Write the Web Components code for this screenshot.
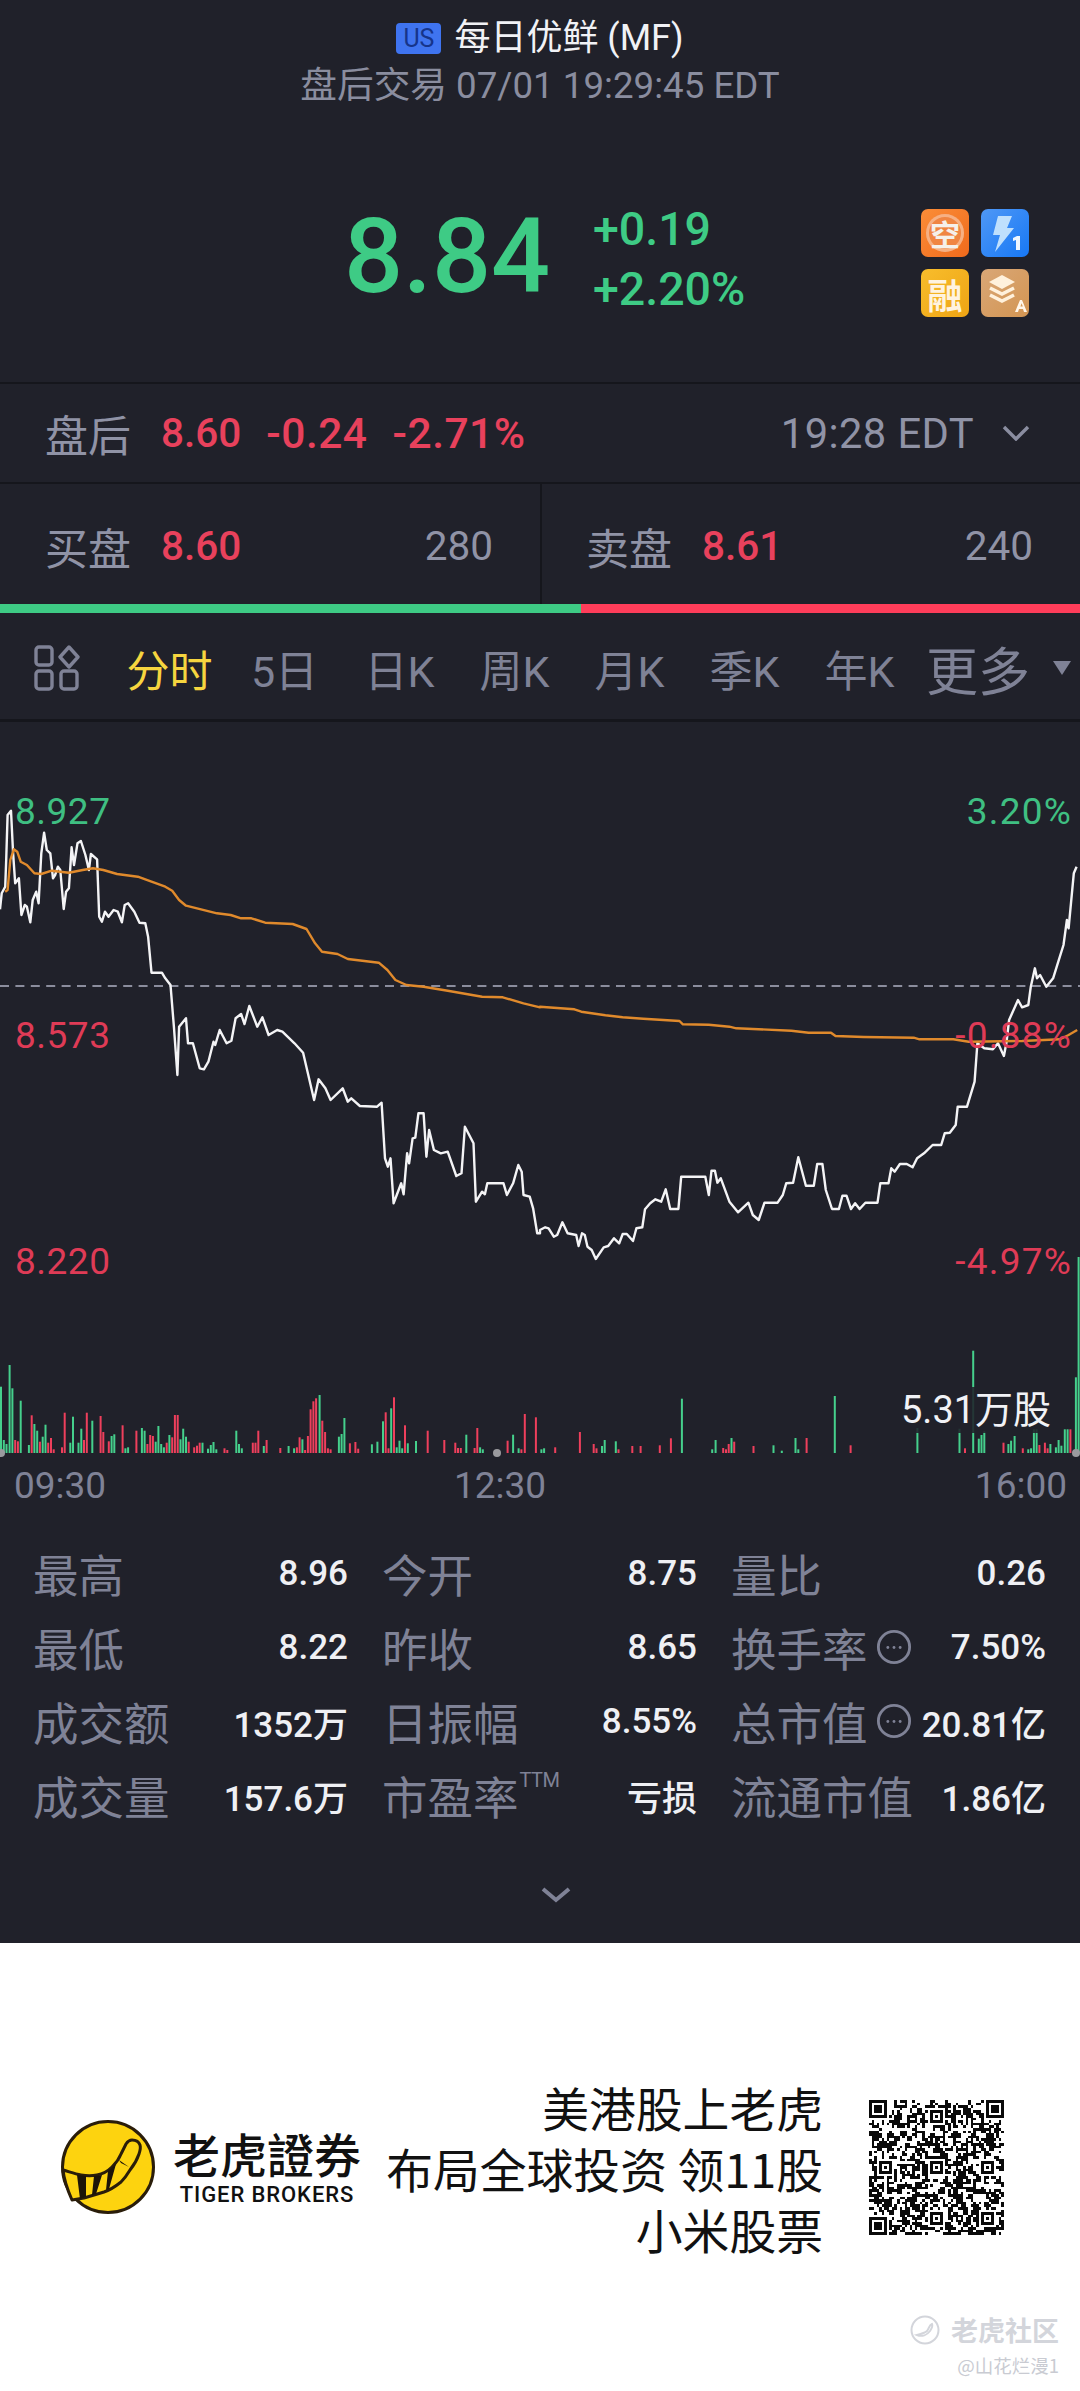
<!DOCTYPE html>
<html lang="zh">
<head>
<meta charset="utf-8">
<title>每日优鲜 (MF)</title>
<style>
  html, body { margin: 0; padding: 0; background: #20212a; }
  body {
    width: 1080px;
    height: 2391px;
    overflow: hidden;
    font-family: Roboto, "Noto Sans CJK SC", sans-serif;
    color: #7f8296;
  }
</style>
</head>
<body>
<quote-header></quote-header>
<quote-price></quote-price>
<quote-session></quote-session>
<quote-depth></quote-depth>
<imbalance-bar></imbalance-bar>
<period-tabs></period-tabs>
<intraday-chart></intraday-chart>
<stat-grid>
  <stat-cell label="最高" value="8.96"></stat-cell>
  <stat-cell label="今开" value="8.75"></stat-cell>
  <stat-cell label="量比" value="0.26"></stat-cell>
  <stat-cell label="最低" value="8.22"></stat-cell>
  <stat-cell label="昨收" value="8.65"></stat-cell>
  <stat-cell label="换手率" value="7.50%" info></stat-cell>
  <stat-cell label="成交额" value="1352万"></stat-cell>
  <stat-cell label="日振幅" value="8.55%"></stat-cell>
  <stat-cell label="总市值" value="20.81亿" info></stat-cell>
  <stat-cell label="成交量" value="157.6万"></stat-cell>
  <stat-cell label="市盈率" value="亏损" sup="TTM"></stat-cell>
  <stat-cell label="流通市值" value="1.86亿"></stat-cell>
</stat-grid>
<promo-footer></promo-footer>

<script>
customElements.define('quote-header', class extends HTMLElement {
  constructor() {
    super()
    this.attachShadow({ mode: 'open' }).innerHTML = `
    <style>
    :host { display: flex; flex-direction: column; align-items: center; height: 112px; padding-top: 18px; box-sizing: border-box; }
    .top { display: flex; align-items: center; height: 40px; color: #f1f2f6; font-size: 36px; line-height: 40px; }
    .us { width: 45px; height: 31px; margin-right: 13px; border-radius: 4px; background: #3f74f0; color: #16348a; font-size: 25px; line-height: 31px; text-align: center; }
    .sub { margin-top: 8px; color: #8a8d9f; font-size: 36.700px; line-height: 40px; white-space: nowrap; }
    </style>
    <div class="top"><span class="us">US</span>每日优鲜 (MF)</div>
    <div class="sub">盘后交易 07/01 19:29:45 EDT</div>
    `
  }
})

customElements.define('quote-price', class extends HTMLElement {
  constructor() {
    super()
    this.attachShadow({ mode: 'open' }).innerHTML = `
    <style>
    :host { display: flex; align-items: center; height: 272px; padding: 20px 51px 0 344px; box-sizing: border-box; border-bottom: 2px solid #15161c; color: #3ecb85; }
    .last { width: 249px; font-size: 104px; font-weight: 500; line-height: 110px; white-space: nowrap; }
    .chg { font-size: 46.500px; font-weight: 500; line-height: 60px; margin-top: 4px; }
    .badges { display: grid; grid-template-columns: 48px 48px; gap: 12px; margin-left: auto; margin-top: 12px; }
    .b { width: 48px; height: 48px; border-radius: 7px; display: flex; align-items: center; justify-content: center; color: #fff3df; overflow: hidden; }
    .kong { background: linear-gradient(135deg, #fb8d38, #ef6a1c); }
    .kong span { width: 38px; height: 38px; border-radius: 50%; display: flex; align-items: center; justify-content: center; font-size: 30px; font-weight: 700; color: #f5f0ea; background: #f08542; box-shadow: 0 0 0 3px #f6b083 inset; }
    .flash { background: linear-gradient(135deg, #4f98f6, #1778f5); }
    .rong { background: linear-gradient(135deg, #f8bd2c, #eea414); font-size: 35px; font-weight: 700; }
    .layer { background: linear-gradient(135deg, #d9a777, #d39552); }
    </style>
    <div class="last">8.84</div>
    <div class="chg"><div>+0.19</div><div>+2.20%</div></div>
    <div class="badges">
      <div class="b kong"><span>空</span></div>
      <div class="b flash"><svg width="48" height="48" viewBox="0 0 48 48"><path d="M17 7h14l-5 12h7L14 43l5-17h-7z" fill="#bfe0fd"/><path d="M36 27h3v14h-4V31l-3 1v-3z" fill="#eef6ff"/></svg></div>
      <div class="b rong">融</div>
      <div class="b layer"><svg width="48" height="48" viewBox="0 0 48 48"><path d="M21 6l13 7-13 7-13-7z" fill="#fff1dc"/><path d="M9 19l12 6 12-6M9 26l12 6 12-6" fill="none" stroke="#fff1dc" stroke-width="3.600"/><path d="M34 43l5-12h2l5 12h-3l-1-3h-4l-1 3zM39.400 37.500h2.400l-1.200-3.200z" fill="#fff6ea" fill-rule="evenodd"/></svg></div>
    </div>
    `
  }
})

customElements.define('quote-session', class extends HTMLElement {
  constructor() {
    super()
    this.attachShadow({ mode: 'open' }).innerHTML = `
    <style>
    :host { display: flex; align-items: center; height: 100px; padding: 0 50px 0 45px; box-sizing: border-box; border-bottom: 2px solid #15161c; font-size: 40.500px; color: #9093a6; }
    .t { width: 116px; font-size: 43px; }
    .r { color: #e8415c; font-weight: 500; }
    .r2 { margin-left: 25px; font-size: 42.500px; letter-spacing: .5px; }
    .time { margin-left: auto; margin-right: 28px; font-size: 41.700px; letter-spacing: .4px; }
    svg { display: block; }
    </style>
    <span class="t">盘后</span>
    <span class="r">8.60</span>
    <span class="r r2">-0.24</span>
    <span class="r r2">-2.71%</span>
    <span class="time">19:28 EDT</span>
    <svg width="28" height="16" viewBox="0 0 28 16"><path d="M2 2l12 12L26 2" fill="none" stroke="#8a8da0" stroke-width="3.400"/></svg>
    `
  }
})

customElements.define('quote-depth', class extends HTMLElement {
  constructor() {
    super()
    this.attachShadow({ mode: 'open' }).innerHTML = `
    <style>
    :host { display: grid; grid-template-columns: 540px 540px; height: 120px; box-sizing: border-box; font-size: 40.500px; color: #9093a6; }
    .side { display: flex; align-items: center; padding: 4px 47px 0 45px; box-sizing: border-box; }
    .side + .side { border-left: 2px solid #15161c; padding-left: 44px; }
    .t { width: 116px; font-size: 43px; }
    .p { color: #e8415c; font-weight: 500; }
    .q { margin-left: auto; }
    </style>
    <div class="side"><span class="t">买盘</span><span class="p">8.60</span><span class="q">280</span></div>
    <div class="side"><span class="t">卖盘</span><span class="p">8.61</span><span class="q">240</span></div>
    `
  }
})

customElements.define('imbalance-bar', class extends HTMLElement {
  constructor() {
    super()
    this.attachShadow({ mode: 'open' }).innerHTML = `
    <style>
    :host { display: flex; height: 9px; background: #ff3d5a; }
    div { width: 581px; background: #3ecb85; }
    </style>
    <div></div>
    `
  }
})

customElements.define('period-tabs', class extends HTMLElement {
  constructor() {
    super()
    this.attachShadow({ mode: 'open' }).innerHTML = `
    <style>
    :host { display: flex; align-items: center; height: 109px; padding: 4px 0 0 34px; box-sizing: border-box; border-bottom: 3px solid #15161c; font-size: 43px; color: #7f8296; }
    svg { display: block; }
    .grid { width: 78px; flex: none; }
    .tab { width: 115px; flex: none; text-align: center; }
    .on { color: #f6d53f; }
    .more { margin-left: 9px; font-size: 52px; }
    .arrow { margin-left: 22px; }
    </style>
    <div class="grid"><svg width="46" height="46" viewBox="0 0 46 46" fill="none" stroke="#7f8296" stroke-width="3.400">
      <rect x="2" y="2" width="16" height="18" rx="3"/><rect x="2" y="26" width="16" height="18" rx="3"/>
      <path d="M35 2l9 10-9 10-9-10z" stroke-linejoin="round"/><rect x="27" y="26" width="16" height="18" rx="3"/></svg></div>
    <span class="tab on">分时</span>
    <span class="tab">5日</span>
    <span class="tab">日K</span>
    <span class="tab">周K</span>
    <span class="tab">月K</span>
    <span class="tab">季K</span>
    <span class="tab">年K</span>
    <span class="more">更多</span>
    <svg class="arrow" width="20" height="14" viewBox="0 0 20 14"><path d="M1 0h18L10 14z" fill="#7f8296"/></svg>
    `
  }
})

// traced from crops 1568 wide for 540 real px, 3x tall: left crop starts at x 0, right crop at x 540, both at y 760
const CROP_X = 540 / 1568
const WHITE_LEFT = '0,448 5,400 15,380 18,300 22,165 32,152 38,280 44,370 55,355 62,465 72,435 78,440 88,487 95,420 105,395 112,430 120,280 128,218 136,270 146,280 154,355 160,345 168,320 175,330 185,447 192,395 200,385 208,262 215,315 225,250 235,243 248,285 258,330 264,282 282,298 288,470 296,485 305,455 315,470 330,450 342,455 354,487 362,435 372,430 390,455 405,488 422,490 430,530 440,638 470,638 480,655 495,675 505,800 515,945 520,800 540,775 546,850 560,850 580,925 592,928 605,905 620,845 625,855 638,810 658,850 672,842 684,775 700,762 710,792 724,738 747,800 762,772 780,825 805,810 820,815 855,850 880,878 912,1020 925,958 945,985 960,1020 995,985 1010,1025 1020,1015 1045,1038 1095,1040 1108,1028 1118,1195 1126,1220 1134,1195 1143,1330 1165,1270 1172,1303 1182,1180 1188,1210 1198,1135 1206,1133 1215,1060 1230,1060 1238,1190 1246,1110 1260,1170 1280,1180 1300,1175 1325,1248 1340,1240 1350,1100 1375,1150 1382,1325 1400,1295 1408,1303 1415,1270 1462,1270 1472,1305 1490,1270 1505,1215 1515,1235 1520,1305 1538,1310 1548,1345 1560,1420 1568,1420'
const WHITE_RIGHT = '0,1410 15,1402 25,1405 40,1430 50,1425 65,1387 80,1420 105,1425 112,1458 122,1420 130,1425 138,1460 150,1470 162,1497 185,1462 198,1458 215,1435 230,1450 240,1422 252,1422 270,1443 280,1405 297,1402 305,1348 320,1330 335,1318 352,1325 365,1288 378,1347 402,1347 410,1250 480,1250 490,1305 498,1232 508,1232 515,1268 525,1255 550,1325 575,1357 605,1328 618,1365 635,1380 652,1328 690,1328 705,1305 715,1270 735,1268 750,1192 772,1277 795,1277 805,1212 820,1212 830,1290 848,1347 868,1347 878,1307 890,1307 903,1347 915,1330 928,1347 945,1328 980,1328 988,1270 1012,1270 1020,1225 1030,1235 1045,1212 1065,1212 1082,1222 1095,1195 1115,1180 1140,1155 1165,1155 1175,1120 1190,1118 1207,1095 1213,1040 1240,1040 1262,965 1270,850 1290,865 1315,868 1330,850 1347,888 1355,845 1362,780 1388,720 1400,742 1418,735 1425,680 1437,625 1443,655 1452,645 1470,680 1490,655 1505,605 1520,555 1530,480 1535,505 1550,340 1558,320'
const AVG_LEFT = '15,395 22,390 30,300 40,268 50,275 60,305 78,315 100,340 120,342 150,332 200,338 240,330 270,325 300,330 340,342 400,350 440,365 480,380 500,392 520,420 540,437 630,460 670,465 700,475 730,475 770,488 850,492 890,507 915,550 935,575 980,582 1010,597 1100,608 1125,630 1148,660 1180,675 1230,680 1300,692 1400,710 1460,712 1520,730 1568,742'
const AVG_RIGHT = '0,740 100,748 120,755 190,766 240,772 300,776 405,783 415,793 490,794 550,800 570,805 730,812 780,818 845,818 858,828 940,831 1085,833 1102,838 1200,838 1245,845 1400,843 1510,838 1535,825 1560,810'

// x,top pairs in the same crop units, but y starts at 1300
const VOL_GREEN_LEFT = [3,260,11,420,19,432,28,195,36,265,60,302,84,435,100,372,108,392,124,410,132,374,204,428,212,350,228,428,236,386,268,362,324,408,332,403,364,445,372,442,412,384,420,392,452,425,460,378,468,432,476,442,492,405,524,418,532,386,540,410,588,428,604,446,612,435,620,426,628,448,686,392,694,432,702,445,766,438,838,438,854,445,878,418,928,285,984,410,992,402,1000,354,1080,433,1096,425,1112,364,1136,325,1152,442,1160,422,1168,445,1184,430,1208,423,1354,404,1394,442,1402,448,1490,404,1506,445]
const VOL_RED_LEFT = [44,420,52,424,92,346,116,425,140,428,148,414,156,448,180,442,188,338,244,420,252,338,292,348,300,396,316,424,356,376,396,392,428,432,436,405,444,408,484,428,500,412,508,345,516,345,548,425,564,442,572,437,580,428,652,445,660,450,734,428,742,428,750,392,774,420,814,444,862,442,870,412,886,450,894,408,902,328,910,304,918,295,936,362,944,396,952,445,960,448,1016,430,1032,426,1040,446,1120,337,1128,445,1144,292,1176,376,1242,392,1290,420,1322,428,1330,444,1338,444,1378,444,1386,384,1474,422,1514,448,1524,342,1556,352]
const VOL_GREEN_RIGHT = [4,448,12,445,180,438,188,420,220,424,412,296,500,448,510,420,556,414,678,436,702,452,742,414,750,448,856,288,1096,384,1218,386,1258,152,1274,416,1282,405,1290,394,1360,432,1368,422,1378,408,1418,448,1426,445,1434,388,1442,388,1482,432,1498,442,1506,420,1514,437,1524,388,1532,388,1556,232,1564,-129]
const VOL_RED_RIGHT = [116,396,156,432,164,445,44,442,228,448,268,438,292,438,348,436,380,415,532,444,540,448,548,432,564,425,620,438,774,414,902,436,1234,445,1346,428,1402,445,1450,435,1466,428,1474,445,1540,388]

const toPage = (pts, dx) => pts.split(' ').map(p => {
  const [x, y] = p.split(',').map(Number)
  return `${(dx + x * CROP_X).toFixed(1)},${(760 + y / 3).toFixed(1)}`
}).join(' ')

const bars = (list, dx, color) => {
  let out = ''
  for (let i = 0; i < list.length; i += 2) {
    const x = dx + list[i] * CROP_X - 1
    const top = 1300 + list[i + 1] / 3
    out += `<rect x="${x.toFixed(1)}" y="${top.toFixed(1)}" width="2" height="${(1453 - top).toFixed(1)}" fill="${color}"/>`
  }
  return out
}

customElements.define('intraday-chart', class extends HTMLElement {
  constructor() {
    super()
    this.attachShadow({ mode: 'open' }).innerHTML = `
    <style>
    :host { display: block; position: relative; height: 798px; font-size: 37px; line-height: 40px; }
    svg { display: block; }
    .l { position: absolute; }
    .g { color: #3fbf82; }
    .r { color: #df3b56; }
    .left { left: 15px; letter-spacing: .5px; }
    .right { right: 8px; letter-spacing: 1.200px; }
    .time { top: 744px; color: #7f8296; }
    .vol { position: absolute; left: 899px; top: 665px; padding: 0 2px; height: 46px; font-size: 38px; line-height: 46px; background: rgba(32,33,42,.88); color: #f1f2f6; }
    </style>
    <svg width="1080" height="798" viewBox="0 722 1080 798">
      ${bars(VOL_GREEN_LEFT, 0, '#45d08c')}${bars(VOL_RED_LEFT, 0, '#ee3f5c')}
      ${bars(VOL_GREEN_RIGHT, 540, '#45d08c')}${bars(VOL_RED_RIGHT, 540, '#ee3f5c')}
      <circle cx="1" cy="1453" r="4" fill="#9a9a9e"/><circle cx="497" cy="1453" r="4" fill="#9a9a9e"/><circle cx="1076" cy="1453" r="4" fill="#9a9a9e"/>
      <path d="M0 986H1080" stroke="#8b8d9d" stroke-width="2" stroke-dasharray="9 6.400"/>
      <polyline points="${toPage(WHITE_LEFT, 0)} ${toPage(WHITE_RIGHT, 540)}" fill="none" stroke="#f4f4f6" stroke-width="2.400" stroke-linejoin="round"/>
      <polyline points="${toPage(AVG_LEFT, 0)} ${toPage(AVG_RIGHT, 540)}" fill="none" stroke="#e08a2c" stroke-width="2.400" stroke-linejoin="round"/>
    </svg>
    <span class="l left g" style="top:70px">8.927</span>
    <span class="l left r" style="top:294px">8.573</span>
    <span class="l left r" style="top:520px">8.220</span>
    <span class="l right g" style="top:70px">3.20%</span>
    <span class="l right r" style="top:294px">-0.88%</span>
    <span class="l right r" style="top:520px">-4.97%</span>
    <span class="l time" style="left:14px">09:30</span>
    <span class="l time" style="left:454px">12:30</span>
    <span class="l time" style="right:13px">16:00</span>
    <span class="vol">5.31万股</span>
    `
  }
})

customElements.define('stat-grid', class extends HTMLElement {
  constructor() {
    super()
    this.attachShadow({ mode: 'open' }).innerHTML = `
    <style>
    :host { display: grid; grid-template-columns: repeat(3, 315px); grid-auto-rows: 74px; column-gap: 34px; height: 423px; padding: 16px 0 0 33px; box-sizing: border-box; position: relative; }
    svg { position: absolute; left: 541px; top: 367px; }
    </style>
    <slot></slot>
    <svg width="30" height="16" viewBox="0 0 30 16"><path d="M2 2l13 11L28 2" fill="none" stroke="#7f8296" stroke-width="4"/></svg>
    `
  }
})

customElements.define('stat-cell', class extends HTMLElement {
  constructor() {
    super()
    const sup = this.getAttribute('sup')
    const info = this.hasAttribute('info')
    this.attachShadow({ mode: 'open' }).innerHTML = `
    <style>
    :host { display: flex; align-items: center; font-size: 45.500px; color: #7f8296; }
    .sup { align-self: flex-start; margin: 12px 0 0 1px; font-size: 20px; line-height: 20px; letter-spacing: -.5px; }
    .info { margin-left: 8px; flex: none; }
    .v { margin-left: auto; color: #eff0f4; font-size: 35px; font-weight: 500; white-space: nowrap; }
    </style>
    <span>${this.getAttribute('label')}</span>
    ${sup ? `<span class="sup">${sup}</span>` : ''}
    ${info ? `<svg class="info" width="36" height="36" viewBox="0 0 38 38"><circle cx="19" cy="19" r="16.500" fill="none" stroke="#7f8296" stroke-width="3"/><circle cx="12.500" cy="19.500" r="1.500" fill="#7f8296"/><circle cx="19" cy="19.500" r="1.500" fill="#7f8296"/><circle cx="25.500" cy="19.500" r="1.500" fill="#7f8296"/></svg>` : ''}
    <span class="v">${this.getAttribute('value')}</span>
    `
  }
})

// the code is not meant to scan: finders, alignment marks and a seeded fill
const qrPath = () => {
  const n = 53
  const cells = []
  let seed = 20210701
  const next = () => {
    seed = (seed * 1664525 + 1013904223) % 4294967296
    return seed / 4294967296
  }
  for (let y = 0; y < n; y++) {
    cells.push([])
    for (let x = 0; x < n; x++) {
      const prev = x ? cells[y][x - 1] : 0
      const above = y ? cells[y - 1][x] : 0
      cells[y].push(next() < .34 + prev * .16 + above * .16 ? 1 : 0)
    }
  }
  const mark = (cx, cy, r, hole) => {
    for (let y = cy - r - 1; y <= cy + r + 1; y++) {
      for (let x = cx - r - 1; x <= cx + r + 1; x++) {
        if (!cells[y] || x < 0 || x >= n) continue
        const d = Math.max(Math.abs(x - cx), Math.abs(y - cy))
        cells[y][x] = d > r ? 0 : d === r || d <= hole ? 1 : 0
      }
    }
  }
  mark(3, 3, 3, 1)
  mark(49, 3, 3, 1)
  mark(3, 49, 3, 1)
  for (const [x, y] of [[26, 6], [6, 26], [26, 26], [46, 26], [26, 46], [46, 46]]) mark(x, y, 2, 0)
  let d = ''
  cells.forEach((row, y) => row.forEach((on, x) => { if (on) d += `M${x} ${y}h1v1h-1z` }))
  return d
}

customElements.define('promo-footer', class extends HTMLElement {
  constructor() {
    super()
    this.attachShadow({ mode: 'open' }).innerHTML = `
    <style>
    :host { display: flex; align-items: center; position: relative; height: 448px; padding: 0 76px 0 60px; box-sizing: border-box; background: #fff; color: #111; font-family: "Noto Sans CJK SC", Roboto, sans-serif; }
    svg { display: block; flex: none; }
    .brand { margin-left: 17px; display: flex; flex-direction: column; align-items: center; }
    .cn { font-family: "Noto Sans CJK TC", sans-serif; font-size: 47px; line-height: 54px; font-weight: 500; }
    .en { font-family: Roboto, sans-serif; font-size: 22px; line-height: 26px; font-weight: 500; letter-spacing: .9px; margin-top: 2px; }
    .slogan { margin-left: auto; margin-right: 46px; text-align: right; font-size: 46.800px; line-height: 61px; }
    .mark { position: absolute; right: 21px; bottom: 14px; width: 170px; color: #c9cbd2; text-align: right; }
    .mark div { display: flex; align-items: center; justify-content: flex-end; font-size: 27px; line-height: 36px; font-weight: 700; color: #d3d5db; }
    .mark svg { margin-right: 11px; }
    .mark small { display: block; font-size: 18.500px; line-height: 24px; margin-top: 5px; }
    </style>
    <svg width="96" height="96" viewBox="0 0 96 96">
      <circle cx="48" cy="48" r="45.500" fill="#fdd30f" stroke="#2a1d0a" stroke-width="3"/>
      <path d="M3 51C10 53 15 55 21 56C27 57 32 57 37 56C43 55 48 52 52 48C56 44 59 40 61 35L66 25C68 22 70 21 72 21C76 21 79 23 80 26C81 29 80 32 79 35C77 41 74 46 70 51C67 56 64 60 61 63C56 67 50 71 44 73L24 79L12 81C8 72 4 61 3 51z" fill="#fdd30f" stroke="#2a1d0a" stroke-width="3" stroke-linejoin="round"/>
      <path d="M17 56L26 57L26 78L20 80zM34 57L42 56L36 75L32 76zM48 52L56 45L49 70L46 71zM59 41L69 48L61 44z" fill="#1c1408"/>
    </svg>
    <div class="brand"><span class="cn">老虎證券</span><span class="en">TIGER BROKERS</span></div>
    <div class="slogan">美港股上老虎<br>布局全球投资 领11股<br>小米股票</div>
    <svg width="135" height="135" viewBox="0 0 53 53" shape-rendering="crispEdges"><path d="${qrPath()}" fill="#0a0a0a"/></svg>
    <div class="mark">
      <div><svg width="30" height="30" viewBox="0 0 30 30" fill="none" stroke="#d3d5db" stroke-width="2"><circle cx="15" cy="15" r="13.500"/><path d="M7 20c5 2 10 0 13-4 2-3 3-5 2-7-3 1-3 5-5 7-2 2-6 3-10 4z"/></svg>老虎社区</div>
      <small>@山花烂漫1</small>
    </div>
    `
  }
})
</script>
</body>
</html>
